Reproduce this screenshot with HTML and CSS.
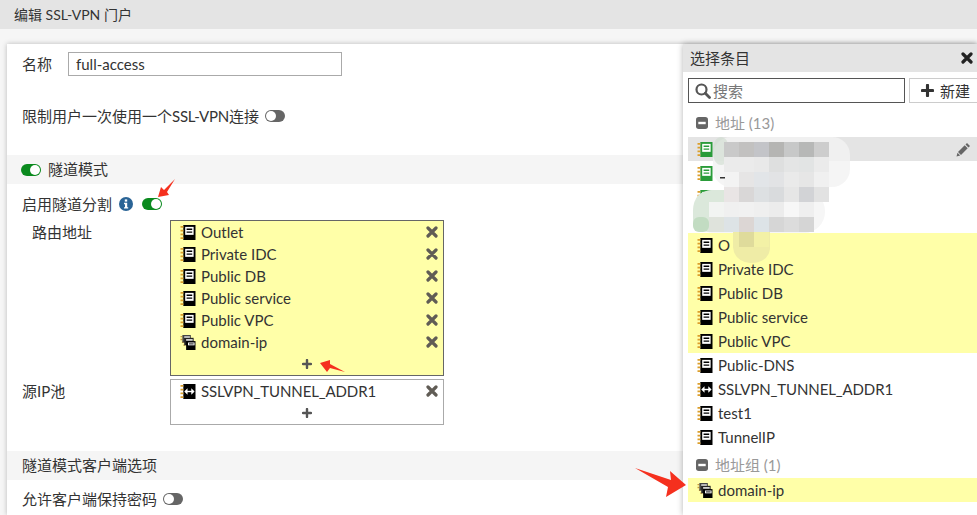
FILE: index.html
```html
<!DOCTYPE html>
<html lang="zh-CN">

<head>
    <meta charset="UTF-8">
    <title>编辑 SSL-VPN 门户</title>
    <link rel="stylesheet" href="styles.css">
</head>

<body>

    <!-- shared icons -->
    <svg class="defs" width="0" height="0">
        <symbol id="i-addr" viewBox="0 0 16 16">
            <rect x="3" y="0" width="13" height="16" fill="#000" />
            <path d="M0 1h3v2H0zM0 5h3v2H0zM0 9h3v2H0zM0 13h3v2H0z" fill="#dc9f2c" />
            <rect x="5" y="2" width="9" height="8.500" fill="#fff" />
            <path d="M6.500 4.500h6M6.500 7.500h6" stroke="#000" stroke-width="1.400" />
        </symbol>
        <symbol id="i-addr-green" viewBox="0 0 16 16">
            <rect x="3" y="0" width="13" height="16" fill="#2a9c3a" />
            <path d="M0 1h3v2H0zM0 5h3v2H0zM0 9h3v2H0zM0 13h3v2H0z" fill="#dc9f2c" />
            <rect x="5" y="2" width="9" height="8.500" fill="#fff" />
            <path d="M6.500 4.500h6M6.500 7.500h6" stroke="#2a9c3a" stroke-width="1.400" />
        </symbol>
        <symbol id="i-group" viewBox="0 0 16 16">
            <path d="M0 1h2v1.500H0zM0 4h2v1.500H0zM1.500 7h2v1.500h-2zM3 10h2v1.500H3z" fill="#c99a3a" />
            <rect x="2" y="0" width="9" height="8" fill="#444" />
            <rect x="4" y="1.500" width="6" height="1.500" fill="#fff" />
            <rect x="4" y="3" width="10" height="8" fill="#222" />
            <rect x="6" y="4.500" width="7" height="1.500" fill="#fff" />
            <rect x="6" y="6.500" width="10" height="9.500" fill="#000" />
            <rect x="8" y="8" width="7" height="3" fill="#fff" />
            <path d="M9 9.500h5" stroke="#000" />
        </symbol>
        <symbol id="i-tunnel" viewBox="0 0 16 16">
            <rect x="3" y="0" width="13" height="16" fill="#000" />
            <path d="M0 1h3v2H0zM0 5h3v2H0zM0 9h3v2H0zM0 13h3v2H0z" fill="#dc9f2c" />
            <path d="M6 8h7" stroke="#fff" stroke-width="1.500" />
            <path d="M7.500 4.500L4 8l3.500 3.500zM11.500 4.500L15 8l-3.500 3.500z" fill="#fff" />
        </symbol>
        <symbol id="i-x" viewBox="0 0 12 12">
            <path d="M2 2l8 8M10 2l-8 8" stroke="currentColor" stroke-width="3.200" stroke-linecap="round" />
        </symbol>
        <symbol id="i-plus" viewBox="0 0 10 10">
            <path d="M5 1v8M1 5h8" stroke="currentColor" stroke-width="2.400" stroke-linecap="round" />
        </symbol>
        <symbol id="i-minus" viewBox="0 0 13 13">
            <rect width="13" height="13" rx="3" fill="currentColor" />
            <rect x="2.500" y="5.200" width="8" height="2.600" fill="#fff" />
        </symbol>
    </svg>

    <header class="page-title">编辑 SSL-VPN 门户</header>

    <main class="card">
        <div class="row row-name">
            <span class="label-name">名称</span>
            <input class="text-input" type="text" value="full-access">
        </div>

        <div class="row row-limit">
            <span>限制用户一次使用一个<span class="caps">SSL-VPN</span>连接</span>
            <span class="toggle"></span>
        </div>

        <div class="band band-first">
            <span class="toggle on"></span>
            <span class="band-text">隧道模式</span>
        </div>

        <div class="row row-split">
            <span>启用隧道分割</span>
            <svg class="info" width="14" height="14" viewBox="0 0 14 14">
                <circle cx="7" cy="7" r="7" fill="#2a6496" />
                <rect x="5.800" y="2.400" width="2.400" height="2.200" fill="#fff" />
                <path d="M5 5.800h3.200v4.400h1v1.400H5v-1.400h1V7.200H5z" fill="#fff" />
            </svg>
            <span class="toggle on"></span>
        </div>

        <div class="field field-route">
            <span class="field-label indent">路由地址</span>
            <div class="picker active">
                <div class="picker-item"><svg class="ico"><use href="#i-addr" /></svg><span>Outlet</span><svg class="del"><use href="#i-x" /></svg></div>
                <div class="picker-item"><svg class="ico"><use href="#i-addr" /></svg><span>Private IDC</span><svg class="del"><use href="#i-x" /></svg></div>
                <div class="picker-item"><svg class="ico"><use href="#i-addr" /></svg><span>Public DB</span><svg class="del"><use href="#i-x" /></svg></div>
                <div class="picker-item"><svg class="ico"><use href="#i-addr" /></svg><span>Public service</span><svg class="del"><use href="#i-x" /></svg></div>
                <div class="picker-item"><svg class="ico"><use href="#i-addr" /></svg><span>Public VPC</span><svg class="del"><use href="#i-x" /></svg></div>
                <div class="picker-item"><svg class="ico"><use href="#i-group" /></svg><span>domain-ip</span><svg class="del"><use href="#i-x" /></svg></div>
                <div class="picker-add"><svg class="add"><use href="#i-plus" /></svg></div>
            </div>
        </div>

        <div class="field field-pool">
            <span class="field-label">源IP池</span>
            <div class="picker">
                <div class="picker-item"><svg class="ico"><use href="#i-tunnel" /></svg><span class="caps">SSLVPN_TUNNEL_ADDR1</span><svg class="del"><use href="#i-x" /></svg></div>
                <div class="picker-add"><svg class="add"><use href="#i-plus" /></svg></div>
            </div>
        </div>

        <div class="band band-second">隧道模式客户端选项</div>

        <div class="row row-keep">
            <span>允许客户端保持密码</span>
            <span class="toggle"></span>
        </div>
    </main>

    <!-- slide-in panel -->
    <aside class="panel">
        <div class="panel-head">
            <span>选择条目</span>
            <svg class="panel-close"><use href="#i-x" /></svg>
        </div>
        <div class="panel-tools">
            <div class="search">
                <svg width="16" height="16" viewBox="0 0 16 16">
                    <circle cx="6.500" cy="6.500" r="5" fill="none" stroke="#555" stroke-width="2.200" />
                    <path d="M10.300 10.300L14.500 14.500" stroke="#555" stroke-width="2.800" stroke-linecap="round" />
                </svg>
                <span>搜索</span>
            </div>
            <div class="new-btn"><svg class="new-plus"><use href="#i-plus" /></svg><span>新建</span></div>
        </div>

        <div class="group-title"><svg class="minus"><use href="#i-minus" /></svg><span>地址 (13)</span></div>
        <div class="entry hover">
            <svg class="ico"><use href="#i-addr-green" /></svg>
            <svg class="pencil" width="15" height="15" viewBox="0 0 15 15">
                <path d="M11 1l3 3-1.500 1.500-3-3zM8.700 3.300l3 3L5 13l-3-3zM1.500 10.800l2.700 2.700L0.500 14.500z" fill="#666" />
            </svg>
        </div>
        <div class="entry"><svg class="ico"><use href="#i-addr-green" /></svg></div>
        <div class="entry"><svg class="ico"><use href="#i-addr-green" /></svg></div>
        <div class="entry"></div>
        <div class="entry picked"><svg class="ico"><use href="#i-addr" /></svg><span>O</span></div>
        <div class="entry picked"><svg class="ico"><use href="#i-addr" /></svg><span>Private IDC</span></div>
        <div class="entry picked"><svg class="ico"><use href="#i-addr" /></svg><span>Public DB</span></div>
        <div class="entry picked"><svg class="ico"><use href="#i-addr" /></svg><span>Public service</span></div>
        <div class="entry picked"><svg class="ico"><use href="#i-addr" /></svg><span>Public VPC</span></div>
        <div class="entry"><svg class="ico"><use href="#i-addr" /></svg><span>Public-DNS</span></div>
        <div class="entry"><svg class="ico"><use href="#i-tunnel" /></svg><span class="caps">SSLVPN_TUNNEL_ADDR1</span></div>
        <div class="entry"><svg class="ico"><use href="#i-addr" /></svg><span>test1</span></div>
        <div class="entry"><svg class="ico"><use href="#i-addr" /></svg><span>TunnelIP</span></div>
        <div class="group-title group-two"><svg class="minus"><use href="#i-minus" /></svg><span>地址组 (1)</span></div>
        <div class="entry picked"><svg class="ico"><use href="#i-group" /></svg><span>domain-ip</span></div>
    </aside>

    <!-- pixelated smear over the hidden entries -->
    <svg class="smear" width="170" height="135" viewBox="0 0 170 135">
        <rect x="23" y="2" width="137" height="50" rx="18" fill="#f3f3f3" opacity="0.8" />
        <rect x="23" y="2" width="16" height="28" rx="12" fill="#cfdccf" opacity="0.6" />
        <rect x="3" y="55" width="132" height="43" rx="21" fill="#f6f6f6" />
        <path d="M34 55H22Q4 56 3 75V85Q4 96 19 97H34z" fill="#dbe8db" />
        <rect x="3" y="82" width="16" height="15" rx="6" fill="#c2dcc2" />
        <path d="M43 97H80V114Q78 128 60 128Q44 126 43 112z" fill="#efeca6" />
        <g>
            <rect x="34" y="7" width="15" height="15" fill="#c9c9c9" />
            <rect x="49" y="7" width="15" height="15" fill="#c2c1c0" />
            <rect x="64" y="7" width="15" height="15" fill="#c3c4c8" />
            <rect x="79" y="7" width="15" height="15" fill="#b5b5b3" />
            <rect x="94" y="7" width="15" height="15" fill="#c7c8c8" />
            <rect x="109" y="7" width="15" height="15" fill="#b7b8b7" />
            <rect x="124" y="7" width="15" height="15" fill="#cdcdcd" />

            <rect x="34" y="22" width="15" height="15" fill="#ebebeb" />
            <rect x="49" y="22" width="15" height="15" fill="#ebebeb" />
            <rect x="64" y="22" width="15" height="15" fill="#e9e9e9" />
            <rect x="79" y="22" width="15" height="15" fill="#dedfdf" />
            <rect x="94" y="22" width="15" height="15" fill="#e4e5e5" />
            <rect x="109" y="22" width="15" height="15" fill="#e2e4e4" />
            <rect x="124" y="22" width="15" height="15" fill="#ebebeb" />

            <rect x="34" y="37" width="15" height="15" fill="#f3f3f3" />
            <rect x="49" y="37" width="15" height="15" fill="#e6e5e5" />
            <rect x="64" y="37" width="15" height="15" fill="#e2e5e8" />
            <rect x="79" y="37" width="15" height="15" fill="#e2e3e5" />
            <rect x="94" y="37" width="15" height="15" fill="#eaeaea" />
            <rect x="109" y="37" width="15" height="15" fill="#e6e6e6" />
            <rect x="124" y="37" width="15" height="15" fill="#f0f0f0" />

            <rect x="34" y="52" width="15" height="15" fill="#e9e5e5" />
            <rect x="49" y="52" width="15" height="15" fill="#d9d7d7" />
            <rect x="64" y="52" width="15" height="15" fill="#dde0e2" />
            <rect x="79" y="52" width="15" height="15" fill="#d9dbdd" />
            <rect x="94" y="52" width="15" height="15" fill="#e6e6e6" />
            <rect x="109" y="52" width="15" height="15" fill="#d2d3d6" />
            <rect x="124" y="52" width="15" height="15" fill="#e2e2e2" />

            <rect x="19" y="67" width="15" height="15" fill="#f2f4f2" />
            <rect x="34" y="67" width="15" height="15" fill="#f0f0f0" />
            <rect x="49" y="67" width="15" height="15" fill="#f1f1f1" />
            <rect x="64" y="67" width="15" height="15" fill="#efefef" />
            <rect x="79" y="67" width="15" height="15" fill="#ececec" />
            <rect x="94" y="67" width="15" height="15" fill="#f7f7f7" />
            <rect x="109" y="67" width="15" height="15" fill="#efefef" />

            <rect x="19" y="82" width="15" height="15" fill="#dfe3dc" />
            <rect x="34" y="82" width="15" height="15" fill="#dde3e6" />
            <rect x="49" y="82" width="15" height="15" fill="#dcd6d4" />
            <rect x="64" y="82" width="15" height="15" fill="#dde3e7" />
            <rect x="79" y="82" width="15" height="15" fill="#d6d6d6" />
            <rect x="94" y="82" width="15" height="15" fill="#dcdcdc" />
            <rect x="109" y="82" width="15" height="15" fill="#d5d5d5" />

            <rect x="49" y="97" width="15" height="15" fill="#dfdb9b" />
            <rect x="64" y="97" width="15" height="15" fill="#f3f1a6" />
            <rect x="30" y="42" width="5" height="1.500" fill="#333" />
        </g>
    </svg>

    <!-- red annotation arrows -->
    <svg class="arrow arrow-split" width="22" height="24" viewBox="0 0 22 24"><path d="M3 20L6 10 9 13 20 2 12 15 14 18z" fill="#f5301e" /></svg>
    <svg class="arrow arrow-add" width="30" height="16" viewBox="0 0 30 16"><path d="M2 5L12 2 12 6 27 14 12 10 9 14z" fill="#f5301e" /></svg>
    <svg class="arrow arrow-pick" width="54" height="31" viewBox="0 0 54 31"><path d="M1 1L37 13 36 4 52 18 32 30 34 20z" fill="#f5301e" /></svg>

</body>

</html>
```

FILE: styles.css
```css
* {
    margin: 0;
    padding: 0;
    box-sizing: border-box;
}

html,
body {
    height: 515px;
    overflow: hidden;
}

body {
    position: relative;
    background: #f6f6f6;
    color: #333;
    font-family: 'Lato', 'Noto Sans CJK SC', sans-serif;
    font-size: 15px;
    line-height: 22px;
}

.defs {
    position: absolute;
}

.page-title {
    height: 29px;
    padding-left: 14px;
    background: #e4e4e4;
    font-size: 14px;
    line-height: 30px;
}

.card {
    height: 471px;
    margin: 15px 0 0 7px;
    padding-top: 8px;
    background: #fff;
    box-shadow: 0 0 5px rgba(0, 0, 0, 0.25);
}

.caps {
    letter-spacing: -0.12px;
}

.row {
    display: flex;
    align-items: center;
    padding-left: 15px;
}

.row-name {
    height: 24px;
}

.label-name {
    width: 46px;
}

.text-input {
    width: 274px;
    height: 24px;
    padding: 0 7px;
    border: 1px solid #aaa;
    color: #333;
    font: inherit;
}

.row-limit {
    height: 22px;
    margin-top: 29px;
    gap: 6px;
}

.row-limit .caps {
    letter-spacing: -0.25px;
}

.toggle {
    position: relative;
    width: 20px;
    height: 12px;
    border-radius: 6px;
    background: #666;
}

.toggle::after {
    content: "";
    position: absolute;
    left: 1px;
    top: 1px;
    width: 10px;
    height: 10px;
    border-radius: 50%;
    background: #fff;
}

.toggle.on {
    background: #0a8a1e;
}

.toggle.on::after {
    left: 9px;
}

.band {
    display: flex;
    align-items: center;
    height: 29px;
    padding-left: 14px;
    background: #f5f5f5;
}

.band-first {
    margin-top: 28px;
    gap: 7px;
}

.band-text {
    margin-top: -2px;
}

.band-second {
    margin-top: 26px;
    padding-left: 15px;
    padding-bottom: 2px;
}

.row-split {
    height: 22px;
    margin-top: 9px;
}

.info {
    margin: 0 9px 0 7px;
}

.field {
    display: flex;
}

.field-route {
    margin-top: 5px;
}

.field-pool {
    margin-top: 3px;
}

.field-label {
    width: 163px;
    padding: 1px 0 0 15px;
}

.field-label.indent {
    padding-left: 25px;
}

.picker {
    width: 274px;
    border: 1px solid #aaa;
    background: #fff;
}

.picker.active {
    border-color: #666;
    background: #ffffa8;
}

.picker-item {
    display: flex;
    align-items: center;
    height: 22px;
    padding-left: 9px;
}

.ico {
    flex: none;
    width: 16px;
    height: 15px;
    margin-right: 5px;
}

.del {
    width: 12px;
    height: 12px;
    margin-left: auto;
    margin-right: 5px;
    color: #605c55;
}

.picker-add {
    display: flex;
    justify-content: center;
    align-items: center;
    height: 22px;
}

.add {
    width: 10px;
    height: 10px;
    color: #555;
}

.row-keep {
    height: 22px;
    margin-top: 8px;
    gap: 6px;
}

/* slide-in panel on the right */
.panel {
    position: absolute;
    top: 44px;
    left: 683px;
    width: 294px;
    height: 471px;
    background: #fff;
    box-shadow: 0 0 6px rgba(0, 0, 0, 0.3);
}

.panel-head {
    display: flex;
    justify-content: space-between;
    align-items: center;
    height: 28px;
    padding: 0 4px 0 7px;
    background: #e4e4e4;
}

.panel-close {
    width: 12px;
    height: 12px;
    color: #222;
}

.panel-tools {
    display: flex;
    gap: 4px;
    margin: 6px 0 0 5px;
}

.search {
    flex: none;
    display: flex;
    align-items: center;
    gap: 2px;
    width: 217px;
    height: 25px;
    padding-left: 6px;
    border: 1px solid #555;
    color: #777;
}

.new-btn {
    flex: none;
    display: flex;
    align-items: center;
    gap: 6px;
    width: 68px;
    height: 25px;
    padding-left: 11px;
    border: 1px solid #ccc;
    border-right: none;
}

.new-plus {
    width: 13px;
    height: 13px;
    color: #333;
}

.group-title {
    display: flex;
    align-items: center;
    gap: 7px;
    height: 24px;
    margin-top: 8px;
    padding-left: 13px;
    color: #999;
}

.group-two {
    margin-top: 3px;
    height: 26px;
}

.minus {
    width: 12px;
    height: 12px;
    color: #666;
}

.entry {
    display: flex;
    align-items: center;
    height: 24px;
    margin-left: 5px;
    padding-left: 9px;
}

.entry.hover {
    margin-top: 2px;
    background: #e4e4e4;
}

.entry.picked {
    background: #ffffa8;
}

.pencil {
    margin-left: auto;
    margin-right: 6px;
}

/* overlays */
.smear {
    position: absolute;
    left: 690px;
    top: 135px;
    pointer-events: none;
}

.arrow {
    position: absolute;
}

.arrow-split {
    left: 155px;
    top: 177px;
}

.arrow-add {
    left: 318px;
    top: 358px;
}

.arrow-pick {
    left: 634px;
    top: 467px;
}
```
